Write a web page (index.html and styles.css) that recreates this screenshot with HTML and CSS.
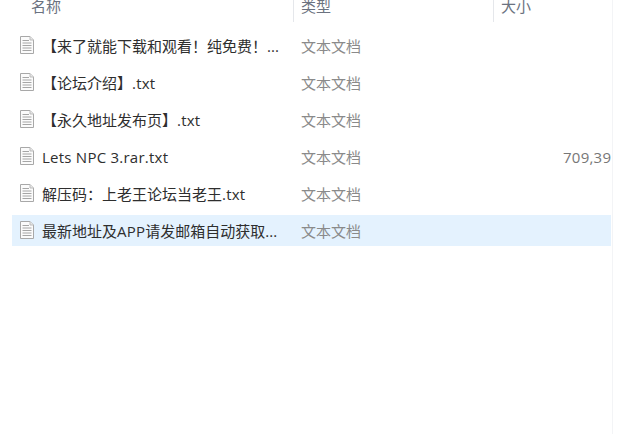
FILE: index.html
```html
<!DOCTYPE html>
<html lang="zh-CN">
<head>
<meta charset="utf-8">
<title>文件列表</title>
<link rel="stylesheet" href="styles.css">
</head>
<body>
<svg class="defs" width="0" height="0" aria-hidden="true">
  <symbol id="doc" viewBox="0 0 16 20">
    <path d="M1.5 1.5H11L14.5 5V18.5H1.5Z" fill="#fbfbfb" stroke="#a8a8a8"/>
    <path d="M11 1.5V5H14.5" fill="#e8e8e8" stroke="#bcbcbc"/>
    <path d="M3.5 5.5H10M3.5 8H12.5M3.5 10.5H12.5M3.5 13H12.5M3.5 15.5H12.5" stroke="#a6a6a6" fill="none"/>
  </symbol>
</svg>
<main class="list">
  <header class="head">
    <div class="col-name head-name">名称</div>
    <div class="col-type head-cell">类型</div>
    <div class="col-size head-cell">大小</div>
  </header>
  <div class="rows">
    <div class="row"><svg class="icon"><use href="#doc"/></svg><span class="name">【来了就能下载和观看！纯免费！...</span><span class="type">文本文档</span><span class="size"></span></div>
    <div class="row"><svg class="icon"><use href="#doc"/></svg><span class="name">【论坛介绍】<span class="latin">.txt</span></span><span class="type">文本文档</span><span class="size"></span></div>
    <div class="row"><svg class="icon"><use href="#doc"/></svg><span class="name">【永久地址发布页】<span class="latin">.txt</span></span><span class="type">文本文档</span><span class="size"></span></div>
    <div class="row"><svg class="icon"><use href="#doc"/></svg><span class="name latin">Lets NPC 3.rar.txt</span><span class="type">文本文档</span><span class="size latin">709,39 KB</span></div>
    <div class="row"><svg class="icon"><use href="#doc"/></svg><span class="name">解压码：上老王论坛当老王<span class="latin">.txt</span></span><span class="type">文本文档</span><span class="size"></span></div>
    <div class="row selected"><svg class="icon"><use href="#doc"/></svg><span class="name">最新地址及<span class="latin">APP</span>请发邮箱自动获取...</span><span class="type">文本文档</span><span class="size"></span></div>
  </div>
</main>
</body>
</html>
```
FILE: styles.css
```css
html, body {
  margin: 0;
  height: 100%;
  background: #fff;
  overflow: hidden;
}
.defs { position: absolute; }
.list {
  width: 612px;
  height: 434px;
  box-sizing: content-box;
  border-right: 1px solid #f3f4f6;
  font-family: "Open Sans", "Noto Sans CJK SC", sans-serif;
  font-size: 15px;
}
.head {
  display: flex;
  height: 22px;
  color: #6b7280;
  line-height: 12px;
}
.col-name { width: 293px; flex: none; }
.head-name { padding-left: 31px; box-sizing: border-box; }
.col-type { width: 200px; flex: none; }
.col-size { flex: 1; }
.head-cell {
  border-left: 1px solid #e5e7eb;
  padding-left: 7px;
  box-sizing: border-box;
}
.rows {
  display: flex;
  flex-direction: column;
  gap: 6px;
  padding: 8px 1px 0 12px;
}
.row {
  display: flex;
  align-items: center;
  height: 31px;
  white-space: nowrap;
}
.selected { background: #e4f2fe; }
.icon {
  width: 16px;
  height: 20px;
  margin: -1px 0 0 7px;
  flex: none;
}
.name, .type, .size {
  padding-top: 2px;
  line-height: 29px;
}
.name {
  width: 259px;
  margin-left: 7px;
  flex: none;
  color: #2e2e2e;
}
.latin { letter-spacing: 0.24px; }
.type {
  width: 262px;
  flex: none;
  color: #8a8a8a;
}
.size {
  width: 49px;
  flex: none;
  overflow: hidden;
  color: #777;
}
```
